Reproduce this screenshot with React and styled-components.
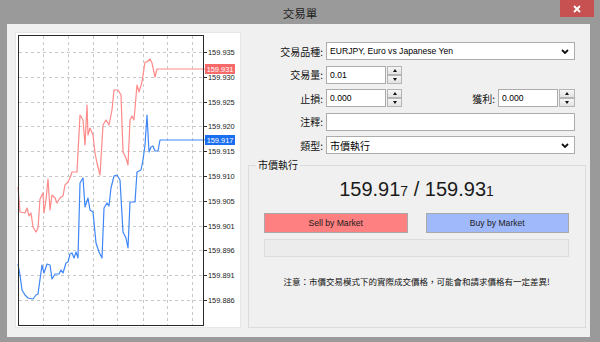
import React from "react";
import styled, { createGlobalStyle } from "styled-components";

const GlobalStyle = createGlobalStyle`
  html, body {
    margin: 0;
    padding: 0;
  }
  body {
    background: #9a9a9a;
    font-family: "Liberation Sans", "Noto Sans CJK TC", sans-serif;
  }
`;

const ask = [
  [18, 187], [20, 212], [25, 213], [27, 208], [29, 216], [31, 213], [33, 227],
  [36, 232], [38, 228], [40, 199], [43, 193], [44, 213], [46, 200], [48, 179],
  [50, 210], [52, 195], [55, 198], [57, 203], [60, 198], [63, 196], [65, 185],
  [68, 182], [70, 178], [72, 172], [77, 172], [80, 115], [83, 120], [85, 145],
  [87, 105], [88, 135], [90, 128], [93, 135], [95, 153], [97, 163], [100, 175],
  [103, 125], [106, 120], [109, 125], [112, 110], [114, 90], [118, 90], [121, 95],
  [123, 152], [126, 158], [128, 165], [130, 120], [132, 116], [134, 120], [137, 85],
  [139, 92], [142, 82], [145, 62], [147, 62], [150, 59], [152, 63], [155, 77],
  [157, 69], [205, 69]
];

const bid = [
  [18, 264], [20, 275], [22, 290], [25, 295], [28, 298], [33, 299], [36, 295],
  [38, 294], [42, 265], [44, 273], [47, 264], [50, 265], [52, 279], [55, 274],
  [59, 274], [61, 270], [63, 273], [66, 263], [68, 262], [70, 254], [72, 253],
  [74, 258], [76, 252], [78, 258], [80, 183], [83, 178], [85, 207], [88, 198],
  [90, 210], [93, 212], [96, 243], [99, 252], [102, 258], [104, 208], [107, 203],
  [109, 206], [111, 188], [114, 176], [117, 175], [120, 180], [123, 232], [126, 238],
  [128, 248], [130, 202], [135, 202], [137, 172], [141, 170], [143, 160], [145, 145],
  [147, 115], [149, 152], [151, 147], [153, 146], [155, 151], [158, 151], [160, 140],
  [205, 140]
];

const levels = [
  ["159.935", 52], ["159.930", 77], ["159.925", 102], ["159.920", 126],
  ["159.915", 151], ["159.910", 176], ["159.905", 201], ["159.901", 226],
  ["159.896", 250], ["159.891", 275], ["159.886", 300]
];

const columns = [43, 68, 93, 117, 143, 167, 192];

const toPoints = list => list.map(([x, y]) => `${x},${y}`).join(" ");

const Window = styled.div`
  width: 600px;
  height: 342px;
  display: flex;
  flex-direction: column;
  background: #9a9a9a;
`;

const TitleBar = styled.div`
  height: 24px;
  display: grid;
  grid-template-columns: 1fr auto 1fr;
  align-items: start;
`;

const Title = styled.div`
  grid-column: 2;
  padding-top: 5px;
  font-family: "Noto Sans CJK TC", sans-serif;
  font-size: 11.5px;
  line-height: 16px;
  color: #1e1e1e;
`;

const CloseButton = styled.div`
  grid-column: 3;
  justify-self: end;
  margin-right: 6px;
  width: 34px;
  height: 17px;
  background: #c75050;
  display: flex;
  align-items: center;
  justify-content: center;
`;

const Body = styled.div`
  flex: 1;
  margin: 0 10px 5px 7px;
  padding: 9px 4px 9px 9px;
  background: #f0f0f0;
  display: flex;
  gap: 8px;
`;

const ChartPanel = styled.div`
  flex: none;
  width: 224px;
  height: 294px;
  background: #ffffff;
  box-shadow: 0 0 0 1px #e6e6e6;
  svg {
    display: block;
  }
`;

const RightColumn = styled.div`
  flex: 1;
  display: flex;
  flex-direction: column;
`;

const Form = styled.div`
  padding: 9px 11px 0 0;
  display: grid;
  grid-template-columns: 75px 1fr;
  grid-auto-rows: 18px;
  column-gap: 3px;
  row-gap: 5.5px;
`;

const Label = styled.div`
  font-family: "Noto Sans CJK TC", sans-serif;
  font-size: 10px;
  color: #111;
  text-align: right;
  align-self: center;
  white-space: nowrap;
`;

const ComboBox = styled.div`
  box-sizing: border-box;
  height: 18px;
  border: 1px solid #acacac;
  background: #ffffff;
  padding: 0 5px 0 3px;
  display: flex;
  align-items: center;
  justify-content: space-between;
  font-size: ${({ $cjk }) => ($cjk ? "10px" : "8.6px")};
  font-family: ${({ $cjk }) =>
    $cjk ? '"Noto Sans CJK TC", sans-serif' : '"Liberation Sans", sans-serif'};
  color: #000;
`;

const TextInput = styled.input`
  box-sizing: border-box;
  height: 18px;
  width: ${({ $width }) => $width || "100%"};
  margin: 0;
  border: 1px solid #acacac;
  background: #ffffff;
  padding: 0 3px;
  font-family: "Liberation Sans", sans-serif;
  font-size: 8.6px;
  color: #000;
  outline: none;
`;

const SpinWrap = styled.div`
  display: flex;
  gap: 1px;
  height: 18px;
  width: ${({ $width }) => $width};
`;

const SpinButtons = styled.div`
  width: 16px;
  display: flex;
  flex-direction: column;
`;

const SpinButton = styled.div`
  flex: 1;
  box-sizing: border-box;
  border: 1px solid #b5b5b5;
  background: linear-gradient(#f6f6f6, #e3e3e3);
  display: flex;
  align-items: center;
  justify-content: center;
  &::after {
    content: "";
    border-left: 2.5px solid transparent;
    border-right: 2.5px solid transparent;
    ${({ $down }) =>
      $down ? "border-top: 3px solid #111;" : "border-bottom: 3px solid #111;"}
  }
`;

const SplitRow = styled.div`
  display: flex;
  justify-content: space-between;
  align-items: center;
`;

const Pair = styled.div`
  display: flex;
  align-items: center;
  gap: 3px;
`;

const Group = styled.fieldset`
  flex: 1;
  margin: 5px 0 0 0;
  padding: 0;
  border: 1px solid #dcdcdc;
  min-width: 0;
  display: flex;
  flex-direction: column;
`;

const Legend = styled.legend`
  margin-left: 7px;
  padding: 0 2px;
  font-family: "Noto Sans CJK TC", sans-serif;
  font-size: 10px;
  line-height: 12px;
  color: #111;
`;

const GroupInner = styled.div`
  padding: 0 16px 0 15px;
  display: flex;
  flex-direction: column;
`;

const Quote = styled.div`
  margin-top: 6px;
  height: 24px;
  text-align: center;
  font-family: "Liberation Sans", sans-serif;
  font-size: 20px;
  line-height: 24px;
  color: #1a1a1a;
  small {
    font-size: 14px;
  }
`;

const Actions = styled.div`
  margin-top: 12px;
  display: grid;
  grid-template-columns: 1fr 1fr;
  column-gap: 18px;
`;

const TradeButton = styled.div`
  box-sizing: border-box;
  height: 20px;
  border: 1px solid #a9a9a9;
  background: ${({ $side }) => ($side === "sell" ? "#ff8080" : "#a0b9fb")};
  display: flex;
  align-items: center;
  justify-content: center;
  font-family: "Liberation Sans", sans-serif;
  font-size: 8.6px;
  color: #1a1a1a;
`;

const Progress = styled.div`
  margin-top: 6px;
  box-sizing: border-box;
  height: 18px;
  border: 1px solid #dcdcdc;
  background: #ececec;
`;

const Note = styled.div`
  margin-top: 18px;
  text-align: center;
  font-family: "Noto Sans CJK TC", sans-serif;
  font-size: 8.5px;
  line-height: 12px;
  color: #111;
  white-space: nowrap;
`;

const Chevron = () => (
  <svg width="8" height="5" viewBox="0 0 8 5">
    <path d="M1 1 L4 4 L7 1" fill="none" stroke="#111" strokeWidth="1.8" />
  </svg>
);

const Spinner = ({ value, width }) => (
  <SpinWrap $width={width}>
    <TextInput defaultValue={value} $width="60px" />
    <SpinButtons>
      <SpinButton />
      <SpinButton $down />
    </SpinButtons>
  </SpinWrap>
);

const PriceTag = ({ y, text, color }) => (
  <g>
    <rect x="205" y={y} width="30" height="10" fill={color} />
    <text
      x="220"
      y={y + 5}
      fill="#ffffff"
      fontSize="7.4"
      fontFamily="Liberation Sans, sans-serif"
      textAnchor="middle"
      dominantBaseline="central"
    >
      {text}
    </text>
  </g>
);

const Chart = () => (
  <svg width="224" height="294" viewBox="16 33 224 294">
    {levels.map(([, y]) => (
      <line key={`h${y}`} x1="19" x2="203" y1={y + 0.5} y2={y + 0.5} stroke="#c8c8c8" strokeDasharray="3 3" />
    ))}
    {columns.map(x => (
      <line key={`v${x}`} x1={x + 0.5} x2={x + 0.5} y1="36" y2="325" stroke="#c8c8c8" strokeDasharray="3 3" />
    ))}
    <polyline points={toPoints(ask)} fill="none" stroke="#ff8a8a" strokeWidth="1.2" strokeLinejoin="round" />
    <polyline points={toPoints(bid)} fill="none" stroke="#3f86f7" strokeWidth="1.2" strokeLinejoin="round" />
    <rect x="18.5" y="35.5" width="185" height="290" fill="none" stroke="#2a2a2a" />
    {levels.map(([label, y]) => (
      <g key={label}>
        <line x1="203" x2="207" y1={y + 0.5} y2={y + 0.5} stroke="#2a2a2a" />
        <text
          x="208"
          y={y + 0.5}
          fontSize="7.4"
          fontFamily="Liberation Sans, sans-serif"
          fill="#1a1a1a"
          dominantBaseline="central"
        >
          {label}
        </text>
      </g>
    ))}
    <PriceTag y={64} text="159.931" color="#f76a6a" />
    <PriceTag y={135} text="159.917" color="#1a6ef0" />
  </svg>
);

export default function App() {
  return (
    <>
      <GlobalStyle />
      <Window>
        <TitleBar>
          <Title>交易單</Title>
          <CloseButton>
            <svg width="8" height="8" viewBox="0 0 8 8">
              <path d="M1 1 L7 7 M7 1 L1 7" stroke="#ffffff" strokeWidth="1.8" />
            </svg>
          </CloseButton>
        </TitleBar>
        <Body>
          <ChartPanel>
            <Chart />
          </ChartPanel>
          <RightColumn>
            <Form>
              <Label>交易品種:</Label>
              <ComboBox>
                <span>EURJPY, Euro vs Japanese Yen</span>
                <Chevron />
              </ComboBox>
              <Label>交易量:</Label>
              <Spinner value="0.01" width="76px" />
              <Label>止損:</Label>
              <SplitRow>
                <Spinner value="0.000" width="76px" />
                <Pair>
                  <Label>獲利:</Label>
                  <Spinner value="0.000" width="77px" />
                </Pair>
              </SplitRow>
              <Label>注釋:</Label>
              <TextInput defaultValue="" />
              <Label>類型:</Label>
              <ComboBox $cjk>
                <span>市價執行</span>
                <Chevron />
              </ComboBox>
            </Form>
            <Group>
              <Legend>市價執行</Legend>
              <GroupInner>
                <Quote>
                  159.91<small>7</small> / 159.93<small>1</small>
                </Quote>
                <Actions>
                  <TradeButton $side="sell">Sell by Market</TradeButton>
                  <TradeButton $side="buy">Buy by Market</TradeButton>
                </Actions>
                <Progress />
                <Note>注意：市價交易模式下的實際成交價格，可能會和請求價格有一定差異!</Note>
              </GroupInner>
            </Group>
          </RightColumn>
        </Body>
      </Window>
    </>
  );
}
